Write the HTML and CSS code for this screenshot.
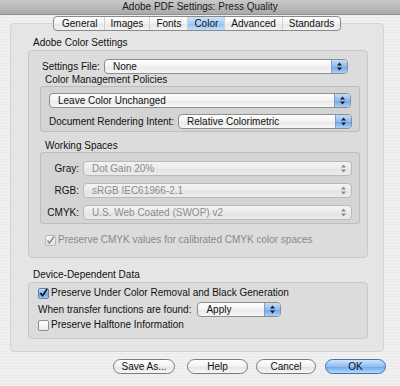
FILE: index.html
```html
<!DOCTYPE html>
<html lang="en">
<head>
    <meta charset="UTF-8">
    <title>Adobe PDF Settings: Press Quality</title>
    <link rel="stylesheet" href="styles.css">
</head>
<body>
    <div class="titlebar">Adobe PDF Settings: Press Quality</div>

    <div class="tabs">
        <span class="tab">General</span>
        <span class="tab">Images</span>
        <span class="tab">Fonts</span>
        <span class="tab active">Color</span>
        <span class="tab">Advanced</span>
        <span class="tab">Standards</span>
    </div>

    <div class="panel">
        <div class="group-label">Adobe Color Settings</div>
        <div class="group group-color">
            <div class="row settings-row">
                <span class="label">Settings File:</span>
                <div class="select wide">None<span class="arrows"><svg width="7" height="9" viewBox="0 0 7 9"><path d="M3.5 0.5 L6 3.5 L1 3.5 Z M3.5 8.5 L6 5.5 L1 5.5 Z" fill="#1a1a1a"/></svg></span></div>
            </div>

            <div class="sub-label">Color Management Policies</div>
            <div class="subgroup policies">
                <div class="select full">Leave Color Unchanged<span class="arrows"><svg width="7" height="9" viewBox="0 0 7 9"><path d="M3.5 0.5 L6 3.5 L1 3.5 Z M3.5 8.5 L6 5.5 L1 5.5 Z" fill="#1a1a1a"/></svg></span></div>
                <div class="row intent-row">
                    <span class="label">Document Rendering Intent:</span>
                    <div class="select wide">Relative Colorimetric<span class="arrows"><svg width="7" height="9" viewBox="0 0 7 9"><path d="M3.5 0.5 L6 3.5 L1 3.5 Z M3.5 8.5 L6 5.5 L1 5.5 Z" fill="#1a1a1a"/></svg></span></div>
                </div>
            </div>

            <div class="sub-label spaces-label">Working Spaces</div>
            <div class="subgroup spaces">
                <div class="row space-row">
                    <span class="label right">Gray:</span>
                    <div class="select wide disabled">Dot Gain 20%<span class="arrows"><svg width="7" height="9" viewBox="0 0 7 9"><path d="M3.5 0.5 L6 3.5 L1 3.5 Z M3.5 8.5 L6 5.5 L1 5.5 Z" fill="#8a8a8a"/></svg></span></div>
                </div>
                <div class="row space-row">
                    <span class="label right">RGB:</span>
                    <div class="select wide disabled">sRGB IEC61966-2.1<span class="arrows"><svg width="7" height="9" viewBox="0 0 7 9"><path d="M3.5 0.5 L6 3.5 L1 3.5 Z M3.5 8.5 L6 5.5 L1 5.5 Z" fill="#8a8a8a"/></svg></span></div>
                </div>
                <div class="row space-row">
                    <span class="label right">CMYK:</span>
                    <div class="select wide disabled">U.S. Web Coated (SWOP) v2<span class="arrows"><svg width="7" height="9" viewBox="0 0 7 9"><path d="M3.5 0.5 L6 3.5 L1 3.5 Z M3.5 8.5 L6 5.5 L1 5.5 Z" fill="#8a8a8a"/></svg></span></div>
                </div>
            </div>

            <div class="check-row preserve-cmyk disabled">
                <span class="checkbox checked-dim"><svg width="9" height="9" viewBox="0 0 9 9"><path d="M1.5 4.5 L3.5 7 L8 0.5" stroke="#8c8c8c" stroke-width="1.5" fill="none"/></svg></span>
                Preserve CMYK values for calibrated CMYK color spaces
            </div>
        </div>

        <div class="group-label device-label">Device-Dependent Data</div>
        <div class="group group-device">
            <div class="check-row">
                <span class="checkbox checked"><svg width="10" height="10" viewBox="0 0 10 10"><path d="M1.5 5 L4 8 L9 0.5" stroke="#111" stroke-width="1.8" fill="none"/></svg></span>
                Preserve Under Color Removal and Black Generation
            </div>
            <div class="row transfer-row">
                <span class="label">When transfer functions are found:</span>
                <div class="select apply">Apply<span class="arrows"><svg width="7" height="9" viewBox="0 0 7 9"><path d="M3.5 0.5 L6 3.5 L1 3.5 Z M3.5 8.5 L6 5.5 L1 5.5 Z" fill="#1a1a1a"/></svg></span></div>
            </div>
            <div class="check-row halftone-row">
                <span class="checkbox"></span>
                Preserve Halftone Information
            </div>
        </div>
    </div>

    <div class="buttons">
        <button class="btn save">Save As...</button>
        <button class="btn help">Help</button>
        <button class="btn cancel">Cancel</button>
        <button class="btn primary">OK</button>
    </div>
</body>
</html>
```

FILE: styles.css
```css
html, body {
    margin: 0;
    padding: 0;
}
body {
    width: 400px;
    height: 386px;
    overflow: hidden;
    font-family: "Liberation Sans", Arial, sans-serif;
    font-size: 10px;
    color: #111;
    white-space: nowrap;
    background-color: #ececec;
    background-image: repeating-linear-gradient(0deg, rgba(255,255,255,0.35) 0 1px, transparent 1px 3px);
}
.titlebar {
    height: 14px;
    line-height: 13px;
    text-align: center;
    font-size: 10px;
    color: #1a1a1a;
    background: linear-gradient(#c9c9c9, #a9a9a9);
    border-bottom: 1px solid #8f8f8f;
}
.tabs {
    position: relative;
    z-index: 1;
    display: flex;
    width: max-content;
    margin: 1px 0 0 53px;
    height: 13px;
    border: 1px solid #8a8a8a;
    border-radius: 4px;
    background: linear-gradient(#ffffff, #f1f1f1 50%, #e6e6e6 51%, #f3f3f3);
    overflow: hidden;
}
.tab {
    line-height: 13px;
    padding: 0 6px;
    border-left: 1px solid #d0d0d0;
}
.tab:first-child {
    border-left: none;
    padding-left: 8px;
}
.tab.active {
    background: linear-gradient(#cde3fb, #a9cdf5 50%, #8fbdf0 51%, #bfe0fb);
}
.panel {
    margin: -8px 0 0 10px;
    width: 374px;
    height: 329px;
    box-sizing: border-box;
    border: 1px solid #d2d2d2;
    border-radius: 4px;
    background: #e5e5e5;
    padding: 12px 0 0 17px;
}
.group-label {
    line-height: 14px;
    margin-left: 5px;
}
.group {
    width: 340px;
    box-sizing: border-box;
    border: 1px solid #c8c8c8;
    border-radius: 4px;
    background: #dcdcdc;
}
.group-color {
    height: 208px;
    padding: 8px 0 0 11px;
}
.group-device {
    height: 57px;
    padding: 3px 0 0 9px;
}
.device-label {
    margin-top: 10px;
}
.row {
    display: flex;
    align-items: center;
}
.label {
    margin-right: 4px;
}
.label.right {
    width: 38px;
    text-align: right;
}
.settings-row .label {
    width: 60px;
    padding-left: 2px;
    box-sizing: border-box;
}
.settings-row .select {
    width: 244px;
}
.sub-label {
    line-height: 12px;
    margin-left: 5px;
}
.spaces-label {
    margin-top: 8px;
}
.subgroup {
    width: 320px;
    box-sizing: border-box;
    border: 1px solid #bdbdbd;
    border-radius: 3px;
    background: #d4d4d4;
}
.policies {
    height: 46px;
    padding: 6px 0 0 8px;
}
.intent-row {
    margin-top: 6px;
}
.intent-row .select {
    width: 174px;
}
.spaces {
    height: 72px;
    padding: 8px 0 0 0;
}
.space-row {
    margin-bottom: 7px;
}
.space-row .select {
    width: 269px;
}
.select {
    position: relative;
    box-sizing: border-box;
    height: 15px;
    line-height: 13px;
    padding-left: 8px;
    border: 1px solid #8e8e8e;
    border-radius: 4px;
    background: linear-gradient(#ffffff, #f2f2f2 50%, #e8e8e8 51%, #f7f7f7);
}
.select.full {
    width: 302px;
}
.select .arrows {
    position: absolute;
    right: 0;
    top: 0;
    bottom: 0;
    width: 15px;
    display: flex;
    align-items: center;
    justify-content: center;
    border-left: 1px solid #7f9fc9;
    border-radius: 0 3px 3px 0;
    background: linear-gradient(#c5dcf8, #8fb9ee 50%, #6ea3ea 51%, #a9d0fa);
}
.select.disabled {
    color: #8c8c8c;
    border-color: #b9b9b9;
    background: linear-gradient(#f3f3f3, #ebebeb 50%, #e3e3e3 51%, #ececec);
}
.select.disabled .arrows {
    background: none;
    border-left: none;
}
.check-row {
    display: flex;
    align-items: center;
    line-height: 14px;
}
.preserve-cmyk {
    margin: 9px 0 0 5px;
}
.check-row.disabled {
    color: #8a8a8a;
}
.checkbox {
    display: inline-flex;
    align-items: center;
    justify-content: center;
    width: 11px;
    height: 11px;
    box-sizing: border-box;
    margin-right: 2px;
    border: 1px solid #8e8e8e;
    border-radius: 2px;
    background: linear-gradient(#ffffff, #ececec);
}
.checkbox.checked {
    border-color: #5a7fb8;
    background: linear-gradient(#c5dcf8, #7eaeec 50%, #5f98e6 51%, #a6cffa);
}
.checkbox.checked-dim {
    border-color: #b9b9b9;
    background: linear-gradient(#f3f3f3, #e6e6e6);
}
.transfer-row {
    margin: 2px 0 1px;
}
.halftone-row {
    margin-top: 1px;
}
.select.apply {
    width: 84px;
    margin-left: 2px;
}
.buttons {
    display: flex;
    margin: 7px 0 0 113px;
}
.btn {
    height: 15px;
    width: 62px;
    padding: 0;
    font-family: inherit;
    font-size: 10px;
    color: #111;
    border: 1px solid #7a7a7a;
    border-radius: 8px;
    background: linear-gradient(#ffffff, #f1f1f1 50%, #e3e3e3 51%, #f7f7f7);
}
.btn.help {
    width: 61px;
    margin-left: 12px;
}
.btn.cancel {
    width: 60px;
    margin-left: 8px;
}
.btn.primary {
    width: 61px;
    margin-left: 9px;
    background: linear-gradient(#cfe4fb, #8fbdf1 50%, #6aa4ec 51%, #b2dbfd);
    border-color: #4a6ea8;
}
```
